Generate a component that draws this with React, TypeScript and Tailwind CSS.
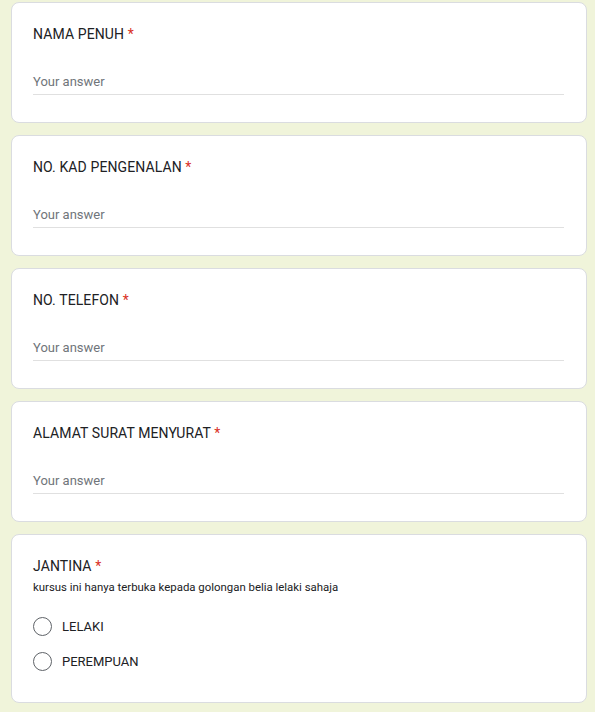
export default function App() {
  const fields = ['NAMA PENUH', 'NO. KAD PENGENALAN', 'NO. TELEFON', 'ALAMAT SURAT MENYURAT'];

  return (
    <div className="min-h-[712px] bg-[#f0f4da] pl-[11px] pr-[8px] pt-[2px] font-['Roboto',sans-serif]">
      <div className="flex flex-col gap-[12px]">
        {fields.map((label) => (
          <div key={label} className="rounded-[8px] border border-[#dadce0] bg-white pl-[21px] pr-[22px] pt-[19px] pb-[27px]">
            <div className="text-[14px] leading-[24px] text-[#202124] tracking-[0.1px]">
              {label} <span className="text-[#d93025]">*</span>
            </div>
            <div className="mt-[24px] h-[25px] w-full border-b border-[#e0e0e0] text-[13px] leading-[24px] text-[#70757a]">
              Your answer
            </div>
          </div>
        ))}

        {/* Jantina with radio options */}
        <div className="rounded-[8px] border border-[#dadce0] bg-white pl-[21px] pr-[22px] pt-[19px] pb-[23px]">
          <div className="text-[14px] leading-[24px] text-[#202124] tracking-[0.1px]">
            JANTINA <span className="text-[#d93025]">*</span>
          </div>
          <div className="mt-[1px] text-[11.4px] leading-[16px] text-[#202124]">
            kursus ini hanya terbuka kepada golongan belia lelaki sahaja
          </div>
          <div className="mt-[14px]">
            {['LELAKI', 'PEREMPUAN'].map((opt) => (
              <div key={opt} className="flex h-[35px] items-center gap-[10px]">
                <div className="h-[19px] w-[19px] rounded-full border-[1.5px] border-[#5f6368]" />
                <span className="text-[13px] text-[#202124]">{opt}</span>
              </div>
            ))}
          </div>
        </div>
      </div>
    </div>
  );
}
